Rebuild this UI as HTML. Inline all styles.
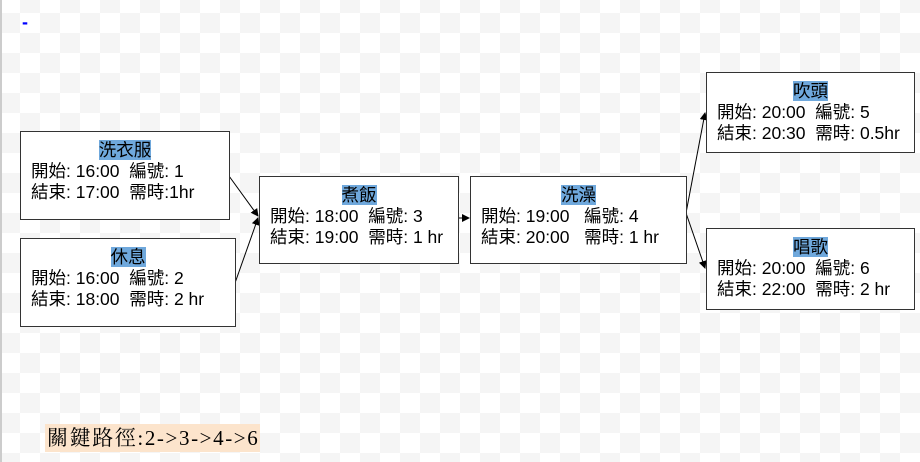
<!DOCTYPE html>
<html><head><meta charset="utf-8"><style>
html,body{margin:0;padding:0;width:920px;height:462px;overflow:hidden;}
body{position:relative;background-color:#fff;
background-image:linear-gradient(45deg,#f5f5f5 25%,transparent 25%,transparent 75%,#f5f5f5 75%),linear-gradient(45deg,#f5f5f5 25%,transparent 25%,transparent 75%,#f5f5f5 75%);
background-size:40px 40px;background-position:0 -7px,20px 13px;
font-family:"Liberation Sans","Noto Sans CJK TC",sans-serif;font-size:17.5px;color:#000;}
.lb{position:absolute;left:0;top:0;width:2px;height:462px;background:#ccc;}
.box{position:absolute;box-sizing:border-box;border:1px solid #333;background:#fff;padding:8px 0 0 10px;line-height:21px;white-space:pre;}
.t{text-align:center;padding-right:10px;}
.t span{background:#6fa8dc;}
.cp{position:absolute;left:45px;top:424px;height:28px;line-height:28px;background:#fce4cc;font-family:"Liberation Serif","Noto Serif CJK SC",serif;font-size:21px;letter-spacing:1.6px;padding:0 1px 0 2px;white-space:nowrap;}
</style></head><body>
<div class="lb"></div>
<div style="position:absolute;left:22px;top:12px;color:#00f;font-weight:bold;font-size:18px">-</div>
<svg style="position:absolute;left:0;top:0" width="920" height="462">
<defs><marker id="a" markerWidth="8" markerHeight="8" refX="7" refY="4" orient="auto" markerUnits="userSpaceOnUse"><path d="M0,0L8,4L0,8z" fill="#000"/></marker></defs>
<g stroke="#000" stroke-width="1" fill="none">
<line x1="229" y1="176" x2="258" y2="216" marker-end="url(#a)"/>
<line x1="235" y1="283" x2="258" y2="218" marker-end="url(#a)"/>
<line x1="458" y1="218" x2="469" y2="218" marker-end="url(#a)"/>
<line x1="686" y1="213" x2="705" y2="113" marker-end="url(#a)"/>
<line x1="686" y1="213" x2="705" y2="268" marker-end="url(#a)"/>
</g></svg>
<div class="box" style="left:20px;top:131px;width:210px;height:89px"><div class="t"><span>洗衣服</span></div>開始: 16:00  編號: 1
結束: 17:00  需時:1hr</div>
<div class="box" style="left:20px;top:238px;width:216px;height:89px"><div class="t"><span>休息</span></div>開始: 16:00  編號: 2
結束: 18:00  需時: 2 hr</div>
<div class="box" style="left:259px;top:176px;width:200px;height:88px"><div class="t"><span>煮飯</span></div>開始: 18:00  編號: 3
結束: 19:00  需時: 1 hr</div>
<div class="box" style="left:470px;top:176px;width:217px;height:88px"><div class="t"><span>洗澡</span></div>開始: 19:00   編號: 4
結束: 20:00   需時: 1 hr</div>
<div class="box" style="left:706px;top:72px;width:209px;height:81px"><div class="t"><span>吹頭</span></div>開始: 20:00  編號: 5
結束: 20:30  需時: 0.5hr</div>
<div class="box" style="left:706px;top:228px;width:209px;height:82px"><div class="t"><span>唱歌</span></div>開始: 20:00  編號: 6
結束: 22:00  需時: 2 hr</div>
<div class="cp">關鍵路徑:2-&gt;3-&gt;4-&gt;6</div>
</body></html>
